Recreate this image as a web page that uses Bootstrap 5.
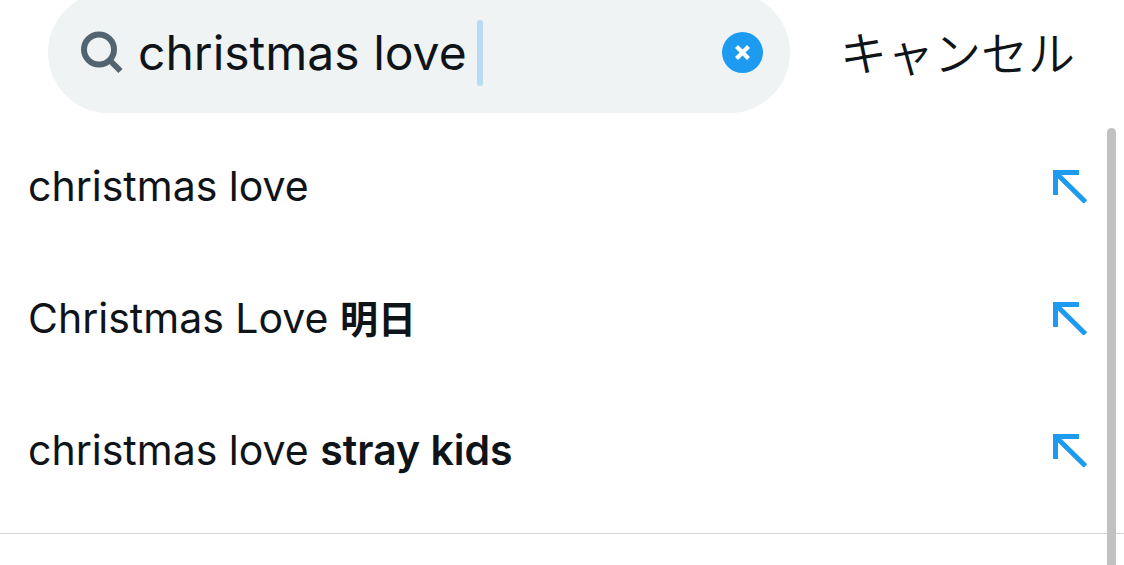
<!DOCTYPE html>
<html lang="ja">
<head>
<meta charset="utf-8">
<meta name="viewport" content="width=device-width, initial-scale=1">
<title>検索</title>
<link href="https://cdn.jsdelivr.net/npm/bootstrap@5.3.0/dist/css/bootstrap.min.css" rel="stylesheet">
<style>
  body { font-family: Inter, "Noto Sans CJK JP", sans-serif; color: #0f1419; background: #fff; overflow: hidden; }
  .search-bar { margin-top: -8px; padding: 0 49px 0 48px; gap: 50px; }
  .search-pill { height: 121px; padding: 0 27px 0 32px; background: #eff3f4; border-radius: 61px; min-width: 0; }
  .search-pill svg { flex: none; }
  .query { position: relative; margin-left: 14px; min-width: 0; }
  .query input { font-size: 48px; line-height: 66px; height: 66px; color: #0f1419; outline: 0; }
  .caret { position: absolute; left: 339px; top: 0; width: 6px; height: 66px; background: #b9dcf2; border-radius: 3px; }
  .cancel { font-size: 47px; line-height: 66px; font-family: "Noto Sans CJK JP", sans-serif; font-weight: 350; color: #0f1419; }
  .results { margin-top: 7px; padding-bottom: 17px; border-bottom: 1px solid #d3d7d9; }
  .result { height: 132px; padding: 0 37px 0 28px; font-size: 41px; line-height: 56px; color: #0f1419; }
  .result b { font-weight: 600; }
  .result b:lang(ja) { font-size: 38px; font-weight: 700; }
  .scroll-thumb { position: absolute; right: 8px; top: 128px; bottom: 0; width: 9px; background: #c1c1c1; border-radius: 5px 5px 0 0; }
</style>
</head>
<body class="vh-100 position-relative d-flex flex-column">
<header class="search-bar d-flex align-items-center">
  <form class="search-pill d-flex align-items-center flex-grow-1">
    <svg width="44" height="44" viewBox="0 0 44 44" fill="none" stroke="#536471" stroke-width="6" aria-hidden="true"><circle cx="19" cy="18.500" r="15"/><path d="M29 28.500 40.500 40"/></svg>
    <div class="query flex-grow-1"><input class="border-0 p-0 bg-transparent w-100 d-block" type="text" aria-label="検索" value="christmas love"><span class="caret"></span></div>
    <button type="reset" class="btn p-0 border-0 d-flex" aria-label="クリア"><svg width="41" height="41" viewBox="0 0 41 41"><circle cx="20.500" cy="20.500" r="20.500" fill="#1d9bf0"/><path d="m16 16 9 9M25 16 16 25" stroke="#fff" stroke-width="4.200" stroke-linecap="square"/></svg></button>
  </form>
  <button type="button" class="btn cancel p-0 pb-1 border-0 text-nowrap flex-shrink-0">キャンセル</button>
</header>
<main class="results" lang="en">
  <a href="#" class="result d-flex align-items-center justify-content-between text-decoration-none"><span>christmas love</span><svg width="35" height="34" viewBox="0 0 35 34" fill="none" stroke="#1d9bf0" stroke-width="5" aria-hidden="true"><path d="M3.500 26V3.500H27M4 4 33.500 33"/></svg></a>
  <a href="#" class="result d-flex align-items-center justify-content-between text-decoration-none"><span>Christmas Love <b lang="ja">明日</b></span><svg width="35" height="34" viewBox="0 0 35 34" fill="none" stroke="#1d9bf0" stroke-width="5" aria-hidden="true"><path d="M3.500 26V3.500H27M4 4 33.500 33"/></svg></a>
  <a href="#" class="result d-flex align-items-center justify-content-between text-decoration-none"><span>christmas love <b>stray kids</b></span><svg width="35" height="34" viewBox="0 0 35 34" fill="none" stroke="#1d9bf0" stroke-width="5" aria-hidden="true"><path d="M3.500 26V3.500H27M4 4 33.500 33"/></svg></a>
</main>
<div class="scroll-thumb"></div>
<script src="https://cdn.jsdelivr.net/npm/bootstrap@5.3.0/dist/js/bootstrap.bundle.min.js"></script>
</body>
</html>
